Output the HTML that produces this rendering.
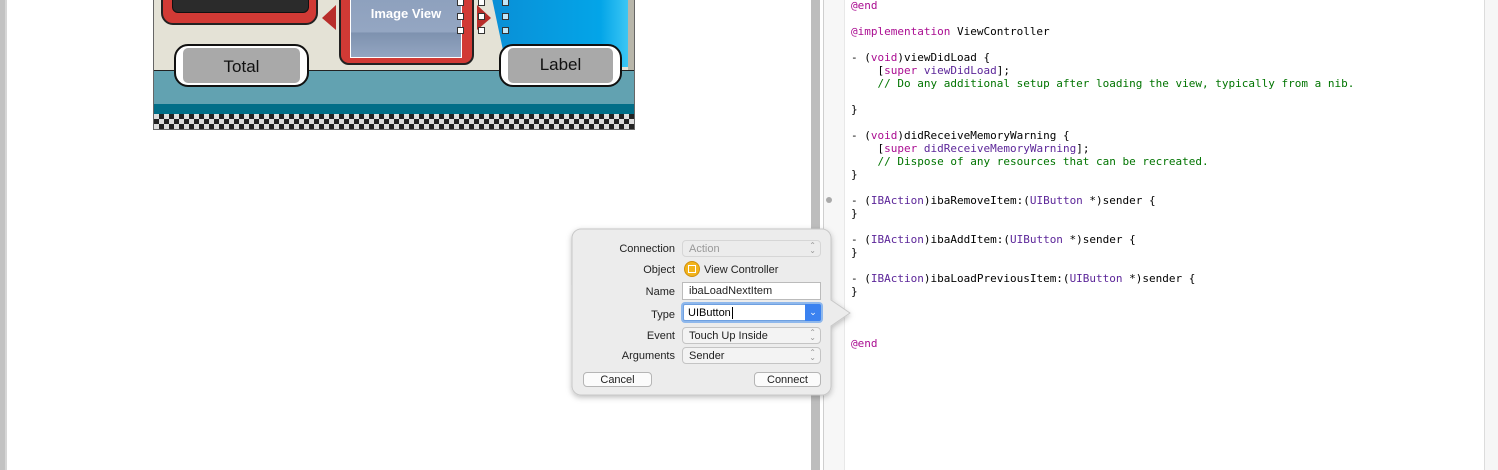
<!DOCTYPE html>
<html><head><meta charset="utf-8"><style>
*{margin:0;padding:0;box-sizing:border-box}
body{width:1498px;height:470px;overflow:hidden;background:#fff;position:relative;font-family:"Liberation Sans",sans-serif}
.a{position:absolute}
.code{position:absolute;left:851px;top:-1px;font-family:"DejaVu Sans Mono","Liberation Mono",monospace;font-size:11px;line-height:13px;white-space:pre;color:#000}
.k{color:#aa0d91}.p{color:#5c2699}.c{color:#007400}
.lbl{position:absolute;right:823px;font-size:11px;color:#222;text-align:right}
.fld{position:absolute;left:682px;width:139px;height:17px;border:1px solid #c4c4c4;border-radius:4px;background:#f3f3f3;font-size:11px;padding-left:6px;line-height:16px;color:#222}
.ud{position:absolute;right:4px;top:2px;font-size:8px;color:#999;line-height:5px;text-align:center}
.btn{position:absolute;height:15px;border:1px solid #b5b5b5;border-radius:4px;background:#fbfbfb;font-size:11px;text-align:center;line-height:14px;color:#222}
.h{position:absolute;width:7px;height:7px;border:1px solid #333;background:#fff}
</style></head><body>
<div class="a" style="left:0;top:0;width:7px;height:470px;background:#c2c2c2"></div>
<div class="a" style="left:5px;top:0;width:2px;height:470px;background:#d6d6d6"></div>

<!-- scene -->
<div class="a" style="left:153px;top:-2px;width:482px;height:132px;border:1px solid #666;background:#e4e2d6;overflow:hidden">
 <div class="a" style="left:7px;top:-12px;width:157px;height:38px;background:#d13a35;border:2px solid #222;border-radius:12px"></div>
 <div class="a" style="left:18px;top:-6px;width:137px;height:20px;background:#2b2b2b;border:1px solid #111;border-radius:6px"></div>
 <svg class="a" style="left:165px;top:5px" width="20" height="28"><polygon points="17,1 17,26 3,14" fill="#b82d2a"/></svg>
 <svg class="a" style="left:321px;top:5px" width="20" height="28"><polygon points="2,1 2,26 16,14" fill="#b82d2a"/></svg>
 <div class="a" style="left:336px;top:-10px;width:138px;height:78px;background:linear-gradient(90deg,#0a8fd6,#03a5e8 80%,#3cc6f4);clip-path:polygon(0 0,100% 0,100% 100%,12% 100%)"></div>
 <div class="a" style="left:474px;top:-10px;width:8px;height:82px;background:#b8b6aa"></div>
 <div class="a" style="left:185px;top:-12px;width:135px;height:78px;background:#d13a35;border:2px solid #222;border-radius:10px"></div>
 <div class="a" style="left:196px;top:-6px;width:112px;height:65px;background:linear-gradient(#8da0bd,#94a6c2 60%,#7e92af 62%,#93a5c1);border:1px solid #fff"></div>
 <div class="a" style="left:196px;top:7px;width:112px;text-align:center;color:#fff;font-weight:bold;font-size:13px">Image View</div>
 <div class="h" style="left:303px;top:0"></div><div class="h" style="left:303px;top:14px"></div><div class="h" style="left:303px;top:28px"></div>
 <div class="h" style="left:324px;top:0"></div><div class="h" style="left:324px;top:14px"></div><div class="h" style="left:324px;top:28px"></div>
 <div class="h" style="left:348px;top:0;background:#bfe6f8"></div><div class="h" style="left:348px;top:14px;background:#bfe6f8"></div><div class="h" style="left:348px;top:28px;background:#bfe6f8"></div>
 <div class="a" style="left:0;top:71px;width:482px;height:1px;background:#222"></div>
 <div class="a" style="left:0;top:72px;width:482px;height:33px;background:#62a2b1"></div>
 <div class="a" style="left:0;top:105px;width:482px;height:10px;background:#016e88"></div>
 <div class="a" style="left:0;top:115px;width:482px;height:17px;background:repeating-conic-gradient(#222 0 25%,#ddd 0 50%) 0 0/10px 10px"></div>
 <div class="a" style="left:57px;top:70px;width:39px;height:8px;border-radius:50%;background:#999;border:1px solid #333"></div>
 <div class="a" style="left:112px;top:70px;width:39px;height:8px;border-radius:50%;background:#999;border:1px solid #333"></div>
 <div class="a" style="left:20px;top:45px;width:135px;height:43px;background:#fff;border:2px solid #111;border-radius:14px"></div>
 <div class="a" style="left:29px;top:49px;width:117px;height:35px;background:#a9a9a9;border-radius:5px;font-size:17px;text-align:center;line-height:37px;color:#111">Total</div>
 <div class="a" style="left:345px;top:45px;width:123px;height:43px;background:#fff;border:2px solid #111;border-radius:14px"></div>
 <div class="a" style="left:354px;top:49px;width:105px;height:35px;background:#a9a9a9;border-radius:5px;font-size:17px;text-align:center;line-height:34px;color:#111">Label</div>
</div>

<!-- divider -->
<div class="a" style="left:811px;top:0;width:9px;height:470px;background:#bdbdbd"></div>
<div class="a" style="left:823px;top:0;width:1px;height:470px;background:#cfcfcf"></div>
<div class="a" style="left:824px;top:0;width:21px;height:470px;background:#f7f7f7"></div>
<div class="a" style="left:844px;top:0;width:1px;height:470px;background:#e8e8e8"></div>
<div class="a" style="left:826px;top:197px;width:6px;height:6px;border-radius:50%;background:#aaa"></div>
<div class="a" style="left:1484px;top:0;width:1px;height:470px;background:#dcdcdc"></div>
<div class="a" style="left:1485px;top:0;width:13px;height:470px;background:#f6f6f6"></div>

<div class="code"><span class="k">@end</span>

<span class="k">@implementation</span> ViewController

- (<span class="k">void</span>)viewDidLoad {
    [<span class="k">super</span> <span class="p">viewDidLoad</span>];
    <span class="c">// Do any additional setup after loading the view, typically from a nib.</span>

}

- (<span class="k">void</span>)didReceiveMemoryWarning {
    [<span class="k">super</span> <span class="p">didReceiveMemoryWarning</span>];
    <span class="c">// Dispose of any resources that can be recreated.</span>
}

- (<span class="p">IBAction</span>)ibaRemoveItem:(<span class="p">UIButton</span> *)sender {
}

- (<span class="p">IBAction</span>)ibaAddItem:(<span class="p">UIButton</span> *)sender {
}

- (<span class="p">IBAction</span>)ibaLoadPreviousItem:(<span class="p">UIButton</span> *)sender {
}



<span class="k">@end</span></div>

<!-- popover -->
<svg class="a" style="left:565px;top:222px" width="300" height="185">
 <defs><filter id="s" x="-10%" y="-10%" width="120%" height="130%"><feDropShadow dx="0" dy="2" stdDeviation="3" flood-color="#000" flood-opacity="0.25"/></filter></defs>
 <path d="M16 7 H257 A9 9 0 0 1 266 16 V78 L285 91 L266 104 V164 A9 9 0 0 1 257 173 H16 A9 9 0 0 1 7 164 V16 A9 9 0 0 1 16 7 Z" fill="#ececec" stroke="#c8c8c8" stroke-width="1" filter="url(#s)"/>
</svg>
<div class="lbl" style="top:243px">Connection</div>
<div class="fld" style="top:240px;color:#999;background:#ececec;border-color:#d6d6d6">Action<div class="ud">⌃<br>⌄</div></div>
<div class="lbl" style="top:264px">Object</div>
<div class="a" style="left:684px;top:261px;width:16px;height:16px;border-radius:50%;background:#f2b31b;border:1px solid #d09010"></div>
<div class="a" style="left:688px;top:265px;width:8px;height:8px;border:1.5px solid #fff;background:#f2b31b"></div>
<div class="a" style="left:704px;top:264px;font-size:11px;color:#222">View Controller</div>
<div class="lbl" style="top:286px">Name</div>
<div class="fld" style="top:282px;height:18px;background:#fff;border-radius:0;border-color:#bbb;line-height:17px">ibaLoadNextItem</div>
<div class="lbl" style="top:309px">Type</div>
<div class="a" style="left:681px;top:302px;width:142px;height:21px;border-radius:4px;background:#8fb8ec"></div>
<div class="fld" style="top:304px;left:683px;width:138px;height:17px;background:#fff;border-radius:2px;border-color:#6fa0e0;color:#000;padding-left:4px;line-height:17px">UIButton<span style="border-left:1px solid #000;margin-left:1px"></span></div>
<div class="a" style="left:805px;top:304px;width:16px;height:17px;background:#3b82f0;border-radius:0 2px 2px 0;color:#fff;font-size:9px;text-align:center;line-height:16px">⌄</div>
<div class="lbl" style="top:330px">Event</div>
<div class="fld" style="top:327px">Touch Up Inside<div class="ud">⌃<br>⌄</div></div>
<div class="lbl" style="top:350px">Arguments</div>
<div class="fld" style="top:347px">Sender<div class="ud">⌃<br>⌄</div></div>
<div class="btn" style="left:583px;top:372px;width:69px">Cancel</div>
<div class="btn" style="left:754px;top:372px;width:67px">Connect</div>
</body></html>
